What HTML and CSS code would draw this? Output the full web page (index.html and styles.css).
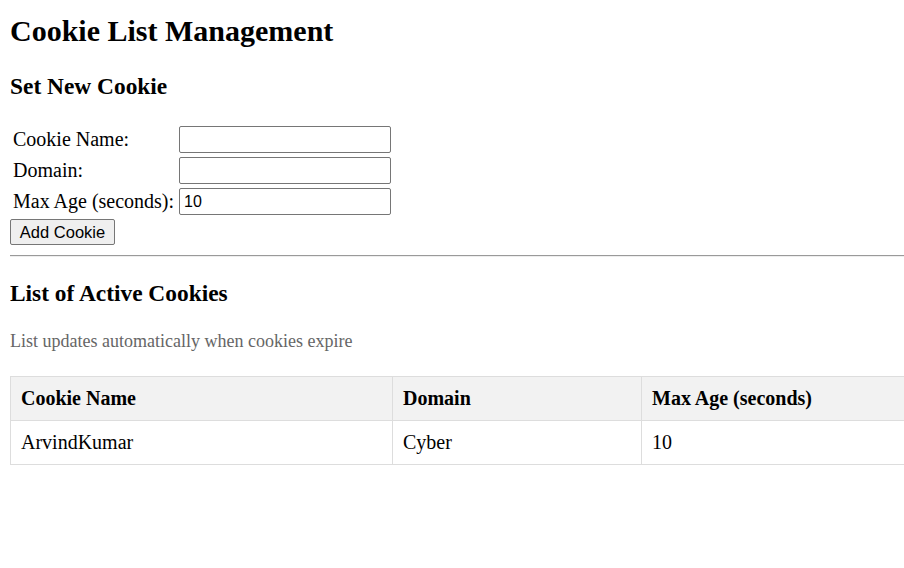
FILE: index.html
```html
<!DOCTYPE html>
<html>
<head>
<meta charset="utf-8">
<title>Cookie List Management</title>
<link rel="stylesheet" href="styles.css">
</head>
<body>
<h1 class="title">Cookie List Management</h1>
<h3 class="section section-form">Set New Cookie</h3>
<form class="cookie-form">
  <table class="form-table">
    <tr><td class="label">Cookie Name:</td><td><input class="field" type="text"></td></tr>
    <tr><td class="label">Domain:</td><td><input class="field" type="text"></td></tr>
    <tr><td class="label">Max Age (seconds):</td><td><input class="field" type="text" value="10"></td></tr>
  </table>
  <button class="btn" type="button">Add Cookie</button>
</form>
<hr class="divider">
<h3 class="section">List of Active Cookies</h3>
<p class="note">List updates automatically when cookies expire</p>
<table class="cookie-table">
  <colgroup>
    <col class="col-name">
    <col class="col-domain">
    <col class="col-age">
  </colgroup>
  <thead>
    <tr><th>Cookie Name</th><th>Domain</th><th>Max Age (seconds)</th></tr>
  </thead>
  <tbody>
    <tr><td>ArvindKumar</td><td>Cyber</td><td>10</td></tr>
  </tbody>
</table>
</body>
</html>
```
FILE: styles.css
```css
html, body {
  overflow: hidden;
}
body {
  margin: 10px;
  width: 100%;
  font-family: "Liberation Serif", "Times New Roman", serif;
  font-size: 20px;
  color: #000;
}
.title {
  font-size: 30px;
  margin: 0 0 25px 0;
  padding-top: 4px;
}
.section {
  font-size: 1.17em;
  margin: 1em 0;
}
.section-form {
  margin-bottom: 23px;
}
.cookie-form {
  margin: 0;
}
.form-table {
  border-spacing: 2px;
  font-size: 20px;
}
.form-table td {
  padding: 1px;
}
.form-table .label {
  padding-right: 2px;
}
.field {
  font-family: "Liberation Sans", Arial, sans-serif;
  font-size: 16px;
  width: 212px;
  height: 27px;
  box-sizing: border-box;
  padding: 1px 4px;
  border: 1px solid #767676;
  border-radius: 2px;
  margin: 0;
  vertical-align: middle;
}
.btn {
  font-family: "Liberation Sans", Arial, sans-serif;
  font-size: 16.5px;
  height: 26px;
  width: 105px;
  padding: 1px 6px;
  border: 1px solid #767676;
  border-radius: 2px;
  background: #efefef;
  color: #000;
  margin: 1px 0 0 0;
}
.divider {
  margin: 10px 0 12px 0;
  border: 0;
  border-top: 1px solid #9a9a9a;
  border-bottom: 1px solid #eeeeee;
}
.note {
  font-size: 18px;
  color: #666;
}
.cookie-table {
  width: 100%;
  border-collapse: collapse;
  margin-top: 24px;
  table-layout: fixed;
}
.col-name {
  width: 382px;
}
.col-domain {
  width: 249px;
}
.cookie-table th,
.cookie-table td {
  border: 1px solid #ddd;
  padding: 10px;
  text-align: left;
}
.cookie-table th {
  background: #f2f2f2;
}
```
